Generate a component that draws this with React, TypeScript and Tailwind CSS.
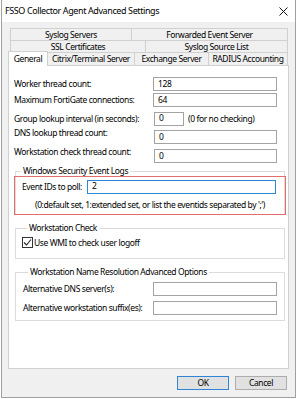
import React from "react";

function Input({ w, value = "", focused = false }: { w: string; value?: string; focused?: boolean }) {
  return (
    <div
      className={`${w} h-[14px] shrink-0 bg-white border ${focused ? "border-[#2f86d6]" : "border-[#a3a3a3]"} flex items-center pl-[4px] leading-none`}
    >
      {value}
    </div>
  );
}

export default function App() {
  return (
    <div className="w-[297px] h-[399px] bg-white overflow-hidden font-['Noto_Sans',sans-serif] text-[8.5px] tracking-[-0.4px] text-black leading-[12px]">
      <div className="ml-[1px] w-[295px] h-[398px] bg-[#f0f0f0] border-x border-b border-[#a0a0a0] flex flex-col">
        {/* Title bar */}
        <div className="h-[22px] bg-white flex items-center justify-between pl-[3px] pr-[7px] shrink-0">
          <span className="text-[9px]">FSSO Collector Agent Advanced Settings</span>
          <svg width="9" height="9" viewBox="0 0 9 9">
            <path d="M0.5 0.5 L8.5 8.5 M8.5 0.5 L0.5 8.5" stroke="#111" strokeWidth="1" />
          </svg>
        </div>

        {/* Tabs */}
        <div className="ml-[6px] mt-[6px] w-[280px]">
          <div className="ml-[2px] flex h-[12px]">
            <div className="w-[121px] border-t border-l border-[#d0d0d0] flex items-center justify-center whitespace-nowrap">Syslog Servers</div>
            <div className="w-[157px] border-t border-l border-r border-[#d0d0d0] flex items-center justify-center whitespace-nowrap">Forwarded Event Server</div>
          </div>
          <div className="ml-[2px] flex h-[12px]">
            <div className="w-[135px] border-t border-l border-[#d0d0d0] flex items-center justify-center whitespace-nowrap">SSL Certificates</div>
            <div className="w-[143px] border-t border-l border-r border-[#d0d0d0] flex items-center justify-center whitespace-nowrap">Syslog Source List</div>
          </div>
          <div className="flex items-end h-[13px]">
            <div className="w-[40px] h-[15px] -mb-[1px] bg-white border-t border-l border-r border-[#d0d0d0] flex items-center justify-center relative z-10 pb-[1px] whitespace-nowrap">General</div>
            <div className="w-[86px] h-[13px] border-t border-[#d0d0d0] flex items-center justify-center whitespace-nowrap">Citrix/Terminal Server</div>
            <div className="w-[74px] h-[13px] border-t border-l border-[#d0d0d0] flex items-center justify-center whitespace-nowrap">Exchange Server</div>
            <div className="w-[80px] h-[13px] border-t border-l border-r border-[#d0d0d0] flex items-center justify-center whitespace-nowrap">RADIUS Accounting</div>
          </div>

          {/* Panel */}
          <div className="w-[281px] h-[304px] bg-white border border-[#d0d0d0] pt-[11px]">
            <div className="pl-[5px]">
              <div className="flex items-center h-[14px]">
                <span className="w-[139px] whitespace-nowrap">Worker thread count:</span>
                <Input w="w-[124px]" value="128" />
              </div>
              <div className="flex items-center h-[14px] mt-[2px]">
                <span className="w-[139px] whitespace-nowrap">Maximum FortiGate connections:</span>
                <Input w="w-[124px]" value="64" />
              </div>
              <div className="flex items-center h-[15px] mt-[4px]">
                <span className="w-[140px] whitespace-nowrap">Group lookup interval (in seconds):</span>
                <Input w="w-[30px]" value="0" />
                <span className="ml-[4px] whitespace-nowrap">(0 for no checking)</span>
              </div>
              <div className="flex items-start h-[15px] mt-[4px]">
                <span className="w-[140px] -mt-[3px] whitespace-nowrap">DNS lookup thread count:</span>
                <Input w="w-[123px]" value="0" />
              </div>
              <div className="flex items-start h-[15px] mt-[4px]">
                <span className="w-[140px] -mt-[3px] whitespace-nowrap">Workstation check thread count:</span>
                <Input w="w-[123px]" value="0" />
              </div>
            </div>

            {/* Group 1 */}
            <fieldset className="ml-[6px] mt-[1px] w-[270px] border border-[#dcdcdc] px-0 pb-0">
              <legend className="ml-[5px] px-[2px]">Windows Security Event Logs</legend>
              <div className="-mx-[2px] -mb-[1px] mt-[-1px] border-[1.5px] border-[#e46e6e] pt-[3px] pb-[3px] pl-[7px] pr-[6px]">
                <div className="flex items-center h-[13px]">
                  <span className="w-[65px] whitespace-nowrap">Event IDs to poll:</span>
                  <Input w="w-[189px]" value="2" focused />
                </div>
                <div className="mt-[6px] pl-[13px] whitespace-nowrap">(0:default set, 1:extended set, or list the eventids separated by ';')</div>
              </div>
            </fieldset>

            {/* Group 2 */}
            <fieldset className="ml-[6px] mt-[7px] w-[270px] border border-[#dcdcdc] pt-[3px] pb-[10px] pl-[6px]">
              <legend className="ml-[5px] px-[2px]">Workstation Check</legend>
              <div className="flex items-center h-[11px]">
                <div className="w-[11px] h-[11px] border border-[#333] flex items-center justify-center">
                  <svg width="9" height="9" viewBox="0 0 9 9">
                    <path d="M1 4.5 L3.5 7 L8 1.5" fill="none" stroke="#222" strokeWidth="1.1" />
                  </svg>
                </div>
                <span className="ml-[1px] whitespace-nowrap">Use WMI to check user logoff</span>
              </div>
            </fieldset>

            {/* Group 3 */}
            <fieldset className="ml-[6px] mt-[7px] w-[270px] border border-[#dcdcdc] pt-[4px] pb-[5px] pl-[7px]">
              <legend className="ml-[5px] px-[2px]">Workstation Name Resolution Advanced Options</legend>
              <div className="flex items-center h-[14px]">
                <span className="w-[130px] whitespace-nowrap">Alternative DNS server(s):</span>
                <Input w="w-[124px]" />
              </div>
              <div className="flex items-center h-[14px] mt-[5px]">
                <span className="w-[130px] whitespace-nowrap">Alternative workstation suffix(es):</span>
                <Input w="w-[124px]" />
              </div>
            </fieldset>
          </div>
        </div>

        {/* Buttons */}
        <div className="mt-[7px] flex justify-end gap-[6px] pr-[8px]">
          <button className="w-[52px] h-[14px] bg-[#e1e1e1] border border-[#2f86d6] flex items-center justify-center leading-none">OK</button>
          <button className="w-[52px] h-[14px] bg-[#e1e1e1] border border-[#adadad] flex items-center justify-center leading-none">Cancel</button>
        </div>
      </div>
    </div>
  );
}
